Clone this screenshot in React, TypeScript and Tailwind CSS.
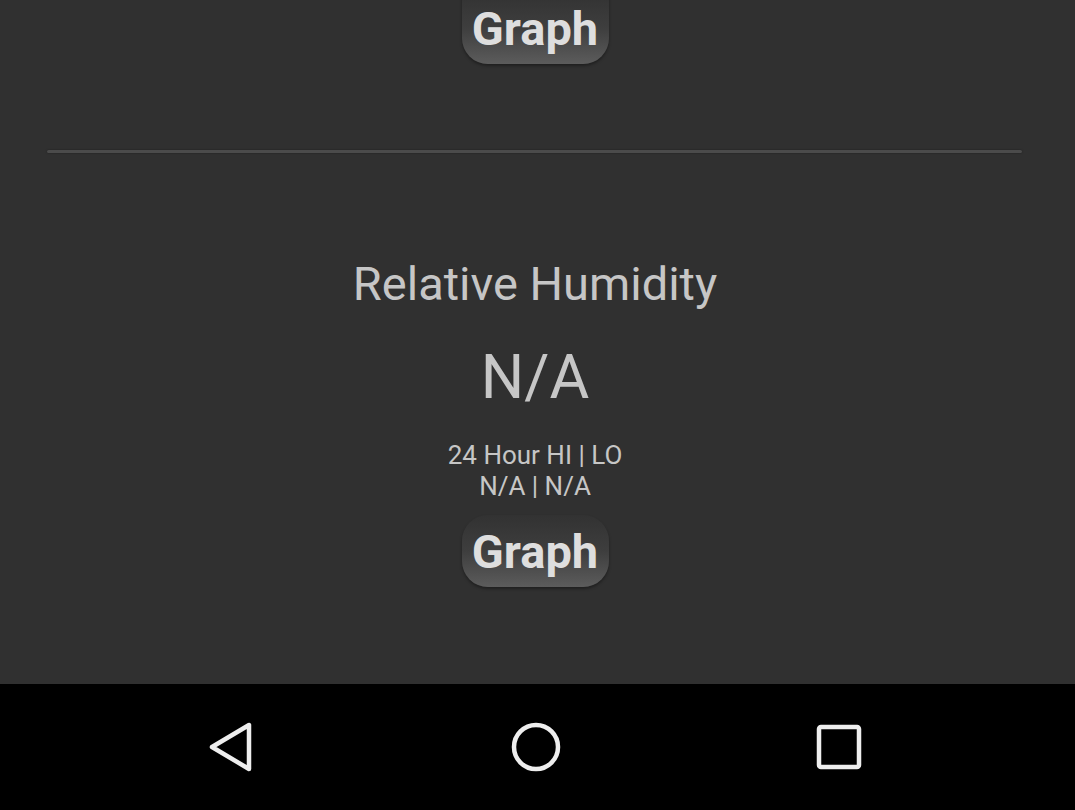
import React from "react";

function GraphButton({ className = "" }: { className?: string }) {
  return (
    <div
      className={
        "w-[147px] h-[72px] rounded-[26px] flex items-center justify-center bg-gradient-to-b from-[#323232] via-[#3e3e3e] to-[#5c5c5c] shadow-[0_2px_3px_rgba(0,0,0,0.35)] " +
        className
      }
    >
      <span className="text-[47px] leading-none font-bold text-[#dedede]">
        Graph
      </span>
    </div>
  );
}

export default function App() {
  return (
    <div
      className="w-[1075px] h-[810px] bg-[#303030] flex flex-col overflow-hidden"
      style={{ fontFamily: "Roboto, 'Noto Sans', sans-serif" }}
    >
      <div className="h-[684px] flex flex-col items-center pr-[5px]">
        <GraphButton className="-mt-[8px] rounded-t-none" />
        <div className="mt-[86px] self-start ml-[47px] w-[975px] h-[3px] bg-[#4b4b4b] rounded-full shadow-[0_0_2px_rgba(0,0,0,0.4)]" />
        <div className="mt-[107px] text-[47px] leading-[48px] text-[#c6c6c6]">
          Relative Humidity
        </div>
        <div className="mt-[39px] text-[61px] leading-[60px] text-[#c6c6c6]">
          N/A
        </div>
        <div className="mt-[33px] flex flex-col items-center text-[26px] leading-[31px] text-[#c6c6c6]">
          <div>24 Hour HI | LO</div>
          <div>N/A | N/A</div>
        </div>
        <GraphButton className="mt-[13px]" />
      </div>
      <div className="flex-1 bg-black flex items-center justify-center gap-[255px] pr-[6px]">
        <svg width="48" height="50" viewBox="0 0 48 50" fill="none">
          <path
            d="M41 3 L41 47 L4 25 Z"
            stroke="#eeeeee"
            strokeWidth="4.5"
            strokeLinejoin="round"
          />
        </svg>
        <svg width="50" height="50" viewBox="0 0 50 50" fill="none">
          <circle cx="25" cy="25" r="22" stroke="#eeeeee" strokeWidth="4.5" />
        </svg>
        <svg width="46" height="46" viewBox="0 0 46 46" fill="none">
          <rect
            x="3"
            y="3"
            width="40"
            height="40"
            rx="2"
            stroke="#eeeeee"
            strokeWidth="4.5"
          />
        </svg>
      </div>
    </div>
  );
}
